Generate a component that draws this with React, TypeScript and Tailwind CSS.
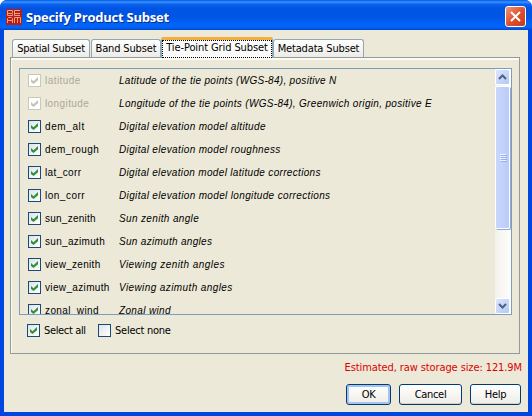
import React from "react";

const UI = "font-['DejaVu_Sans_Condensed','DejaVu_Sans',sans-serif] [font-stretch:condensed]";

type Row = { name: string; nameSpacing: string; text: string; textSpacing: string; disabled?: boolean };

const rows: Row[] = [
  { name: "latitude", nameSpacing: "tracking-[0.45px]", text: "Latitude of the tie points (WGS-84), positive N", textSpacing: "tracking-[0.3px]", disabled: true },
  { name: "longitude", nameSpacing: "tracking-[0.4px]", text: "Longitude of the tie points (WGS-84), Greenwich origin, positive E", textSpacing: "tracking-[0.32px]", disabled: true },
  { name: "dem_alt", nameSpacing: "tracking-[0.6px]", text: "Digital elevation model altitude", textSpacing: "tracking-[0.35px]" },
  { name: "dem_rough", nameSpacing: "tracking-[0.4px]", text: "Digital elevation model roughness", textSpacing: "tracking-[0.35px]" },
  { name: "lat_corr", nameSpacing: "tracking-[0.4px]", text: "Digital elevation model latitude corrections", textSpacing: "tracking-[0.33px]" },
  { name: "lon_corr", nameSpacing: "tracking-[0.5px]", text: "Digital elevation model longitude corrections", textSpacing: "tracking-[0.35px]" },
  { name: "sun_zenith", nameSpacing: "tracking-[0.25px]", text: "Sun zenith angle", textSpacing: "tracking-[0.35px]" },
  { name: "sun_azimuth", nameSpacing: "tracking-[0.3px]", text: "Sun azimuth angles", textSpacing: "tracking-[0.3px]" },
  { name: "view_zenith", nameSpacing: "tracking-[0.3px]", text: "Viewing zenith angles", textSpacing: "tracking-[0.45px]" },
  { name: "view_azimuth", nameSpacing: "tracking-[0.35px]", text: "Viewing azimuth angles", textSpacing: "tracking-[0.4px]" },
  { name: "zonal_wind", nameSpacing: "tracking-[0.4px]", text: "Zonal wind", textSpacing: "tracking-[0.35px]" },
];

function Check({ checked = true, disabled = false }: { checked?: boolean; disabled?: boolean }) {
  return (
    <span
      className={
        "flex h-[13px] w-[13px] shrink-0 items-center justify-center border " +
        (disabled ? "border-[#cac8bb] bg-white" : "border-[#1c4a78] bg-linear-to-br from-[#dfe3e6] to-white")
      }
    >
      {checked && (
        <svg width="9" height="9" viewBox="0 0 9 9">
          <path d="M1 3 3.500 5.200 8 1V4.200L3.500 8 1 6z" fill={disabled ? "#c4c2b4" : "#2f8f3a"} />
        </svg>
      )}
    </span>
  );
}

function Tab({ label, className }: { label: string; className: string }) {
  return (
    <div className={"flex h-[18px] items-center justify-center rounded-t-[3px] border border-b-0 border-[#91a7b4] bg-linear-to-b from-white to-[#ecebe6] " + className}>
      <span>{label}</span>
    </div>
  );
}

function ScrollButton({ down = false }: { down?: boolean }) {
  return (
    <div className="flex h-4 w-[15px] shrink-0 items-center justify-center rounded-[2px] border border-white bg-linear-to-br from-[#dce6fe] to-[#b4c8f6]">
      <svg width="9" height="6" viewBox="0 0 9 6" className={down ? "rotate-180" : ""}>
        <path d="M1 5 4.5 1.5 8 5" fill="none" stroke="#4d6185" strokeWidth="2" />
      </svg>
    </div>
  );
}

function Button({ label, className, focused = false }: { label: string; className: string; focused?: boolean }) {
  return (
    <button
      className={
        "flex h-[21px] items-center justify-center rounded-[3px] border border-[#003c74] bg-linear-to-b from-white to-[#eeede6] " +
        (focused ? "shadow-[inset_0_0_0_2px_#a9c3f0] " : "shadow-[inset_0_-1px_0_#d6d0c5] ") +
        className
      }
    >
      {label}
    </button>
  );
}

export default function App() {
  return (
    <div className={"flex h-[416px] w-[532px] flex-col overflow-hidden rounded-t-[7px] bg-[#0054e3] text-[11px] leading-[14px] tracking-[-0.1px] whitespace-nowrap text-black " + UI}>
      <header className="flex h-[30px] shrink-0 items-center bg-[linear-gradient(180deg,#0058e6_0%,#3a93ff_7%,#0a62ee_14%,#0054e3_28%,#0055e5_55%,#0164fb_82%,#0162f5_92%,#0046c9_100%)] pt-[3px] pr-[6px] pl-[6px]">
        <svg width="16" height="16" viewBox="0 0 16 16" className="shrink-0">
          <path d="M0 0h16v16H0z" fill="#b71d13" />
          <g fill="none" stroke="#eda082" strokeWidth="1">
            <path d="M1.5 1.5h5v2l-1 1 1 1v1h-5zM1.5 4.5h5M14 1.5H8.5v5H14M8.5 4.5H14M1.5 14V9.5l1-1h3l1 1V14M1.5 11.5h5M8.5 14V8.500h6V14M11.500 8.500V14" />
          </g>
        </svg>
        <h1 className="ml-1 font-['Open_Sans','Noto_Sans',sans-serif] text-[13px] font-bold tracking-[-0.22px] text-white [font-stretch:normal] [text-shadow:1px_1px_0_#0b2f87]">Specify Product Subset</h1>
        <button className="ml-auto flex h-[21px] w-[21px] items-center justify-center rounded-[3px] border border-white bg-linear-to-br from-[#ec9478] via-[#e0512d] to-[#c53b16]">
          <svg width="13" height="13" viewBox="0 0 13 13">
            <path d="M2 2 11 11M11 2 2 11" stroke="white" strokeWidth="2" />
          </svg>
        </button>
      </header>

      <main className="flex min-h-0 flex-1 flex-col border-x-4 border-b-4 border-[#0046e0] bg-[#ece9d8] px-[6px] pb-[7px]">
        <nav className="flex h-[27px] shrink-0 items-end pl-[2px]">
          <Tab label="Spatial Subset" className="mr-px w-[78px] tracking-[-0.25px]" />
          <Tab label="Band Subset" className="w-[70px] tracking-[-0.15px]" />
          <div className="z-10 -mb-px flex h-[21px] w-[112px] flex-col rounded-t-[2px] border-x border-t-[3px] border-x-[#91a7b4] border-t-[#f5ad3d] bg-[#fbfbf9]">
            <div className="flex h-[18px] items-center justify-center border border-dotted border-black pb-0.5">
              <span>Tie-Point Grid Subset</span>
            </div>
          </div>
          <Tab label="Metadata Subset" className="w-[91px] tracking-[-0.15px]" />
        </nav>

        <section className="flex h-[297px] w-[510px] shrink-0 flex-col border border-[#919b9c] px-2 pt-[10px] shadow-[inset_0_2px_0_#fbfaf5,inset_1px_0_0_#fbfaf5]">
          <div className="flex h-[247px] w-[493px] shrink-0 overflow-hidden border border-[#7f9db9]">
            <div className="min-w-0 flex-1 overflow-hidden font-['Liberation_Sans',Arial,sans-serif] text-[10px] leading-[13px]">
              {rows.map((row) => (
                <div key={row.name} className="flex h-[23px] items-center pl-2">
                  <Check disabled={row.disabled} />
                  <span className={"ml-1 w-[74px] " + row.nameSpacing + (row.disabled ? " text-[#aca899]" : "")}>{row.name}</span>
                  <em className={row.textSpacing}>{row.text}</em>
                </div>
              ))}
            </div>
            <div className="flex w-4 shrink-0 flex-col bg-linear-to-r from-[#f3f1ec] to-[#fefefb]">
              <ScrollButton />
              <div className="mt-px flex h-[143px] w-[15px] items-center justify-center rounded-[2px] border border-white bg-linear-to-r from-[#c9d7fc] to-[#b9cbf7] shadow-[1px_1px_0_#91aad7]">
                <div className="flex flex-col gap-px">
                  <i className="h-px w-[6px] bg-[#eef4fe] shadow-[1px_1px_0_#8cb0f8]" />
                  <i className="h-px w-[6px] bg-[#eef4fe] shadow-[1px_1px_0_#8cb0f8]" />
                  <i className="h-px w-[6px] bg-[#eef4fe] shadow-[1px_1px_0_#8cb0f8]" />
                  <i className="h-px w-[6px] bg-[#eef4fe] shadow-[1px_1px_0_#8cb0f8]" />
                </div>
              </div>
              <div className="flex-1" />
              <ScrollButton down />
            </div>
          </div>
          <div className="mt-[8px] flex h-[15px] items-center pl-2">
            <Check />
            <span className="ml-1 w-[54px] tracking-[-0.35px]">Select all</span>
            <Check checked={false} />
            <span className="ml-1 tracking-[-0.25px]">Select none</span>
          </div>
        </section>

        <p className="mt-[7px] text-right text-[#dd0000]">Estimated, raw storage size: 121.9M</p>
        <footer className="mt-auto flex justify-end gap-2 pr-px">
          <Button label="OK" className="w-[45px] tracking-[-0.3px]" focused />
          <Button label="Cancel" className="w-[63px] tracking-[-0.3px]" />
          <Button label="Help" className="w-[51px] tracking-[-0.3px]" />
        </footer>
      </main>
    </div>
  );
}
